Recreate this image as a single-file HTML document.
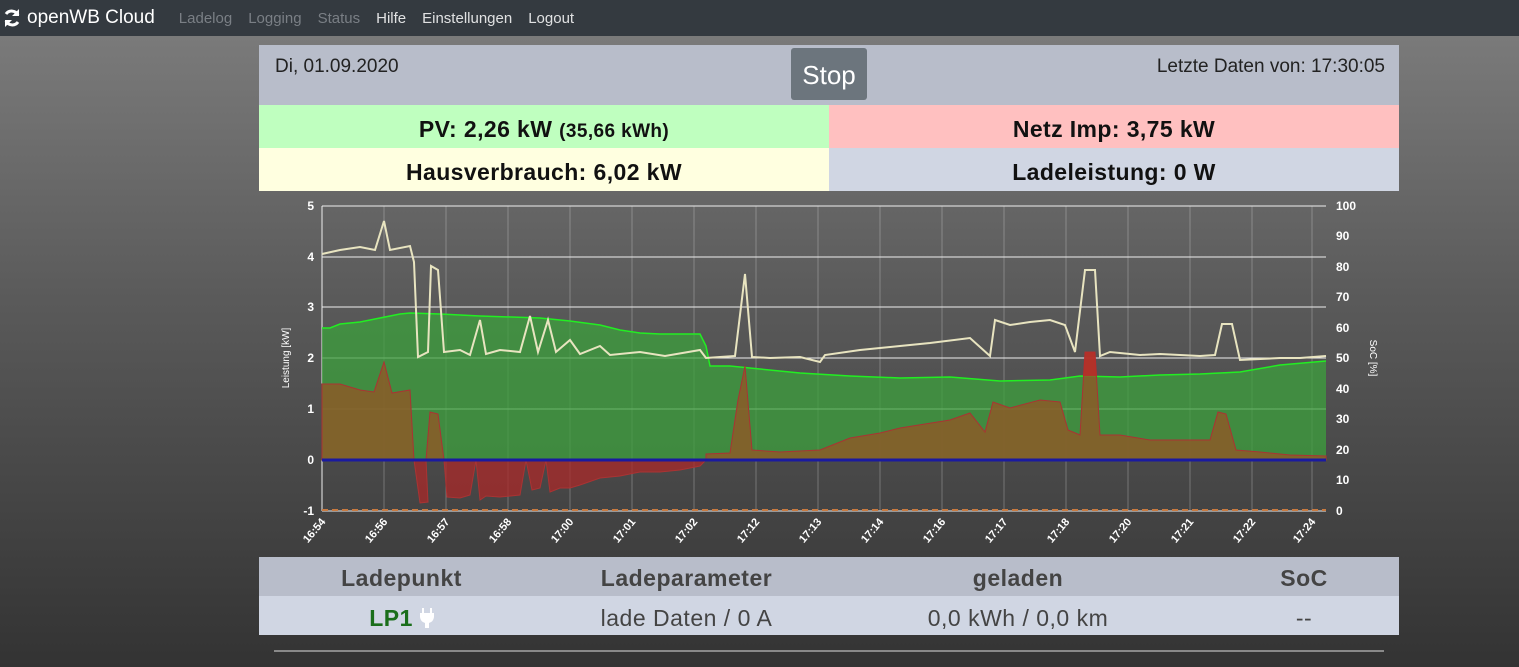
<!DOCTYPE html>
<html><head><meta charset="utf-8"><style>
*{box-sizing:border-box;margin:0;padding:0}
body{width:1519px;height:667px;overflow:hidden;font-family:"Liberation Sans",sans-serif;background:linear-gradient(#7a7a7a 36px,#5a5a5a 300px,#333 667px)}
.nav{height:36px;background:#343a40;display:flex;align-items:center;color:#fff}
.nav .brand{font-size:19px;margin-left:2px;margin-right:24px;display:flex;align-items:center;gap:5px}
.nav a{font-size:15px;margin-right:16px;color:rgba(255,255,255,.85)}
.nav a.d{color:#7a7f85}
.wrap{position:absolute;left:259px;width:1140px}
.top{top:45px;height:60px;background:#b8bdca;font-size:19px;color:#222}
.stop{position:absolute;left:532px;top:3px;width:76px;height:52px;background:#6c757d;border-radius:3px;color:#fff;font-size:26px;text-align:center;line-height:54px}
.cell{position:absolute;height:43px;width:570px;text-align:center;font-weight:bold;font-size:23px;line-height:49px;color:#111;letter-spacing:.4px}
.tbl{top:557px;height:78px}
.tbl div{position:absolute;text-align:center;font-size:23px;letter-spacing:.5px}
</style></head><body>
<div class="nav"><span class="brand"><svg width="20" height="20" viewBox="0 0 20 20"><path d="M16 7A7 7 0 0 0 4 6M4 13a7 7 0 0 0 12 1" stroke="#fff" stroke-width="3" fill="none"/><path d="M17 1v7h-7zM3 19v-7h7z" fill="#fff"/></svg>openWB Cloud</span><a class="d">Ladelog</a><a class="d">Logging</a><a class="d">Status</a><a>Hilfe</a><a>Einstellungen</a><a>Logout</a></div>
<div class="wrap top"><span style="position:absolute;left:16px;top:11px">Di, 01.09.2020</span><div class="stop">Stop</div><span style="position:absolute;right:14px;top:11px">Letzte Daten von: 17:30:05</span></div>
<div class="cell" style="left:259px;top:105px;background:#bfffbf">PV: 2,26 kW <span style="font-size:19px">(35,66 kWh)</span></div>
<div class="cell" style="left:829px;top:105px;background:#ffc0c0">Netz Imp: 3,75 kW</div>
<div class="cell" style="left:259px;top:148px;background:#ffffe0">Hausverbrauch: 6,02 kW</div>
<div class="cell" style="left:829px;top:148px;background:#d0d6e3">Ladeleistung: 0 W</div>
<svg style="position:absolute;left:0;top:0" width="1519" height="667" font-family="Liberation Sans" font-size="12" font-weight="bold" fill="#fff">
<g stroke="rgba(255,255,255,.25)" stroke-width="1"><path d="M384 206V511M446 206V511M508 206V511M570 206V511M632 206V511M694 206V511M756 206V511M818 206V511M880 206V511M942 206V511M1004 206V511M1066 206V511M1128 206V511M1190 206V511M1252 206V511M1312 206V511"/></g>
<g stroke="#eee" stroke-width="1"><path d="M322 206H1326M322 257H1326M322 307H1326M322 358H1326M322 409H1326M322 511H1326M322 206V511"/></g>
<polygon fill="rgba(60,160,60,.75)" points="322,460 322,328 330,328 340,324 360,322 380,318 400,314 410,313 440,314 480,316 540,318 570,321 600,325 620,330 640,333 660,334 700,334 706,346 710,366 730,366 760,369 800,373 850,376 900,378 950,377 1000,381 1050,380 1080,376 1120,377 1160,375 1200,374 1240,372 1280,365 1326,361 1326,460"/>
<polyline fill="none" stroke="#2e2" stroke-width="1.5" points="322,328 330,328 340,324 360,322 380,318 400,314 410,313 440,314 480,316 540,318 570,321 600,325 620,330 640,333 660,334 700,334 706,346 710,366 730,366 760,369 800,373 850,376 900,378 950,377 1000,381 1050,380 1080,376 1120,377 1160,375 1200,374 1240,372 1280,365 1326,361"/>
<polygon fill="rgba(140,90,40,.85)" stroke="#a33" points="322,460 322,384 340,384 360,390 374,392 384,362 392,393 410,390 414,460"/>
<polygon fill="rgba(140,90,40,.85)" stroke="#a33" points="426,460 430,412 438,414 444,460"/>
<polygon fill="rgba(170,40,40,.75)" stroke="#a33" points="414,460 420,503 428,502 426,460 444,460 447,497 460,498 470,495 476,460 480,500 486,496 500,497 520,495 526,460 532,490 540,488 546,460 550,492 560,488 570,488 580,485 600,478 620,476 640,472 660,472 680,470 700,466 706,460"/>
<polygon fill="rgba(140,90,40,.85)" stroke="#a33" points="706,460 706,454 730,453 738,400 745,366 752,450 780,452 820,450 850,438 880,433 900,428 950,420 970,413 985,432 993,402 1010,408 1040,400 1060,402 1068,430 1080,435 1085,352 1095,352 1100,435 1120,435 1150,440 1210,440 1218,412 1226,414 1236,450 1260,452 1290,455 1326,456 1326,460"/>
<polygon fill="rgba(190,40,40,.8)" points="1083,376 1085,352 1095,352 1097,376"/>
<polyline fill="none" stroke="#e8e4c0" stroke-width="2" points="322,254 340,250 360,247 375,250 384,221 390,250 410,246 414,262 418,357 428,352 431,266 438,270 444,352 460,350 470,355 480,320 486,354 500,350 520,352 530,316 538,352 548,320 556,352 570,340 580,354 600,346 610,355 640,352 665,356 700,350 706,358 720,357 735,356 745,274 752,357 770,358 800,357 820,362 825,355 860,350 900,346 930,343 970,338 990,356 995,320 1010,325 1030,322 1050,320 1065,325 1075,352 1085,270 1095,270 1100,356 1110,352 1140,355 1160,354 1200,356 1215,355 1222,324 1232,324 1240,360 1280,358 1300,358 1326,356"/>
<path d="M322 510H1326" stroke="#c87a40" stroke-width="2" stroke-dasharray="6,4"/>
<path d="M322 460H1326" stroke="#1a1aa0" stroke-width="3"/>
<g text-anchor="end"><text x="314" y="210">5</text><text x="314" y="261">4</text><text x="314" y="311">3</text><text x="314" y="362">2</text><text x="314" y="413">1</text><text x="314" y="464">0</text><text x="314" y="515">-1</text></g>
<g><text x="1336" y="210">100</text><text x="1336" y="240">90</text><text x="1336" y="271">80</text><text x="1336" y="301">70</text><text x="1336" y="332">60</text><text x="1336" y="362">50</text><text x="1336" y="393">40</text><text x="1336" y="423">30</text><text x="1336" y="454">20</text><text x="1336" y="484">10</text><text x="1336" y="515">0</text></g>
<text transform="translate(289,358) rotate(-90)" text-anchor="middle" font-size="10" font-weight="normal">Leistung [kW]</text>
<text transform="translate(1370,358) rotate(90)" text-anchor="middle" font-size="10" font-weight="normal">SoC [%]</text>
<g text-anchor="end" font-size="11"><text transform="translate(326,522) rotate(-50)">16:54</text><text transform="translate(388,522) rotate(-50)">16:56</text><text transform="translate(450,522) rotate(-50)">16:57</text><text transform="translate(512,522) rotate(-50)">16:58</text><text transform="translate(574,522) rotate(-50)">17:00</text><text transform="translate(636,522) rotate(-50)">17:01</text><text transform="translate(698,522) rotate(-50)">17:02</text><text transform="translate(760,522) rotate(-50)">17:12</text><text transform="translate(822,522) rotate(-50)">17:13</text><text transform="translate(884,522) rotate(-50)">17:14</text><text transform="translate(946,522) rotate(-50)">17:16</text><text transform="translate(1008,522) rotate(-50)">17:17</text><text transform="translate(1070,522) rotate(-50)">17:18</text><text transform="translate(1132,522) rotate(-50)">17:20</text><text transform="translate(1194,522) rotate(-50)">17:21</text><text transform="translate(1256,522) rotate(-50)">17:22</text><text transform="translate(1316,522) rotate(-50)">17:24</text></g>
<path d="M274 651H1384" stroke="#ddd" stroke-width="1"/>
</svg>
<div class="wrap tbl"><div style="left:0;top:0;width:1140px;height:39px;background:#b8bdca"></div><div style="left:0;top:39px;width:1140px;height:39px;background:#d0d6e3"></div>
<div style="left:0;width:285px;top:8px;font-weight:bold;color:#444">Ladepunkt</div>
<div style="left:285px;width:285px;top:8px;font-weight:bold;color:#444">Ladeparameter</div>
<div style="left:614px;width:290px;top:8px;font-weight:bold;color:#444">geladen</div>
<div style="left:940px;width:210px;top:8px;font-weight:bold;color:#444">SoC</div>
<div style="left:0;width:285px;top:48px;font-weight:bold;color:#1a6e1a">LP1 <svg width="14" height="20" viewBox="0 0 14 20" style="vertical-align:-2px"><path d="M3 0v5M11 0v5" stroke="#fff" stroke-width="2"/><path d="M0 5h14v4a7 7 0 0 1-5 6v5h-4v-5a7 7 0 0 1-5-6z" fill="#fff"/></svg></div>
<div style="left:285px;width:285px;top:48px;color:#444">lade Daten / 0 A</div>
<div style="left:614px;width:290px;top:48px;color:#444">0,0 kWh / 0,0 km</div>
<div style="left:940px;width:210px;top:48px;color:#444">--</div>
</div>
</body></html>
